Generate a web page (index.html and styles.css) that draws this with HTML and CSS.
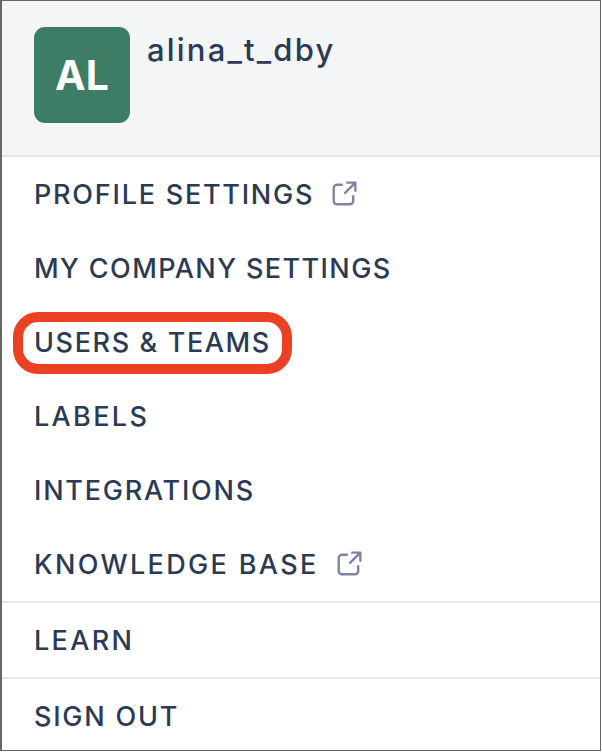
FILE: index.html
```html
<!DOCTYPE html>
<html lang="en">
<head>
<meta charset="utf-8">
<title>Account menu</title>
<link rel="stylesheet" href="styles.css">
</head>
<body>
<div class="menu">
  <header class="head">
    <div class="avatar">AL</div>
    <div class="name">alina_t_dby</div>
  </header>
  <section class="group">
    <a class="item"><span class="label">PROFILE SETTINGS</span>
      <svg class="ext" viewBox="0 0 24 24"><path d="M10 3.5H5.5a3 3 0 0 0-3 3v12a3 3 0 0 0 3 3h12a3 3 0 0 0 3-3V14M13 11 22 2M15 1.5h7.5V9"/></svg></a>
    <a class="item"><span class="label tight">MY COMPANY SETTINGS</span></a>
    <a class="item"><span class="label ring">USERS &amp; TEAMS</span></a>
    <a class="item"><span class="label wide">LABELS</span></a>
    <a class="item"><span class="label">INTEGRATIONS</span></a>
    <a class="item"><span class="label wide">KNOWLEDGE BASE</span>
      <svg class="ext" viewBox="0 0 24 24"><path d="M10 3.5H5.5a3 3 0 0 0-3 3v12a3 3 0 0 0 3 3h12a3 3 0 0 0 3-3V14M13 11 22 2M15 1.5h7.5V9"/></svg></a>
  </section>
  <section class="group">
    <a class="item"><span class="label wide">LEARN</span></a>
  </section>
  <section class="group">
    <a class="item"><span class="label">SIGN OUT</span></a>
  </section>
</div>
</body>
</html>
```
FILE: styles.css
```css
* { box-sizing: border-box; }
html, body { margin: 0; background: #fff; }
body { width: 602px; height: 752px; font-family: "Inter", "Liberation Sans", sans-serif; color: #2b3a55; }
.menu {
  width: 601px;
  height: 751px;
  border: 1px solid #666;
  border-left-width: 2px;
  display: flex;
  flex-direction: column;
  overflow: hidden;
}
.head {
  height: 154px;
  flex: none;
  padding: 26px 32px;
  background: #f4f5f7;
  display: flex;
  gap: 17px;
}
.avatar {
  width: 96px;
  height: 96px;
  border-radius: 11px;
  background: #3d7d66;
  color: #fff;
  font-size: 41px;
  font-weight: 700;
  display: flex;
  align-items: center;
  justify-content: center;
}
.name { font-size: 31px; font-weight: 500; letter-spacing: 2.2px; line-height: 46px; }
.group { border-top: 2px solid #e6e6e6; flex: none; }
.item {
  height: 74px;
  padding-left: 32px;
  display: flex;
  align-items: center;
  gap: 17px;
}
.label {
  position: relative;
  font-size: 27px;
  font-weight: 500;
  letter-spacing: 1.77px;
  white-space: nowrap;
}
.tight { letter-spacing: 1.4px; }
.wide { letter-spacing: 2.35px; }
.ring { letter-spacing: 1.62px; }
.ring::after {
  content: "";
  position: absolute;
  left: -21px;
  right: -21px;
  top: -14px;
  bottom: -15px;
  border: 10px solid #ec4024;
  border-radius: 25px;
}
.ext {
  width: 26px;
  height: 26px;
  fill: none;
  stroke: #7d85a5;
  stroke-width: 2.2;
  stroke-linecap: round;
  stroke-linejoin: round;
}
```
